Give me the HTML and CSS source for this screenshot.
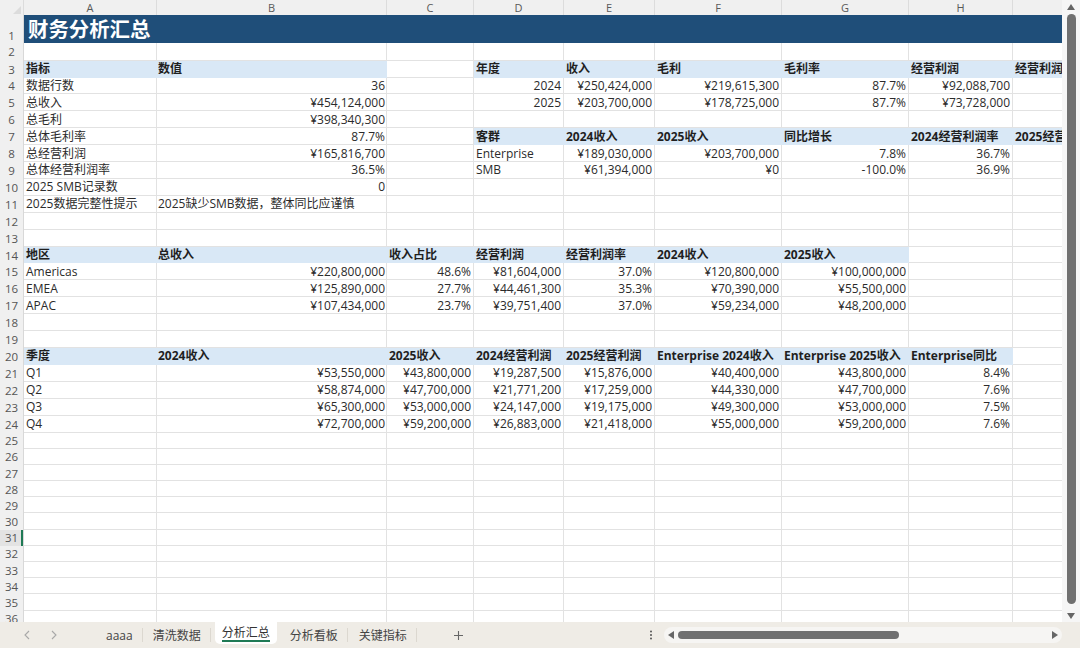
FILE: index.html
```html
<!DOCTYPE html>
<html lang="zh-CN">
<head>
<meta charset="utf-8">
<title>财务分析汇总</title>
<link rel="stylesheet" href="styles.css">
</head>
<body>
<div class="app">
  <div class="main">
    <div class="sheet">
      <table class="grid">
        <colgroup><col class="c0"><col class="ca"><col class="cb"><col class="cc"><col class="cd"><col class="ce"><col class="cf"><col class="cg"><col class="ch"><col class="ci"></colgroup>
        <thead>
          <tr class="cols"><th class="corner"><svg class="corner-mark" width="8" height="8" viewBox="0 0 8 8"><path d="M8 0V8H0Z" fill="#dcdcdc"/></svg></th><th>A</th><th>B</th><th>C</th><th>D</th><th>E</th><th>F</th><th>G</th><th>H</th><th>I</th></tr>
        </thead>
        <tbody>
          <tr class="title-row"><th class="bottom">1</th><td class="title" colspan="9">财务分析汇总</td></tr>
          <tr class="gap"><th>2</th><td></td><td></td><td></td><td></td><td></td><td></td><td></td><td></td><td></td></tr>
          <tr><th>3</th><td class="hd">指标</td><td class="hd">数值</td><td></td><td class="hd">年度</td><td class="hd">收入</td><td class="hd">毛利</td><td class="hd">毛利率</td><td class="hd">经营利润</td><td class="hd">经营利润率</td></tr>
          <tr><th>4</th><td>数据行数</td><td class="r">36</td><td></td><td class="r">2024</td><td class="r">¥250,424,000</td><td class="r">¥219,615,300</td><td class="r">87.7%</td><td class="r">¥92,088,700</td><td></td></tr>
          <tr><th>5</th><td>总收入</td><td class="r">¥454,124,000</td><td></td><td class="r">2025</td><td class="r">¥203,700,000</td><td class="r">¥178,725,000</td><td class="r">87.7%</td><td class="r">¥73,728,000</td><td></td></tr>
          <tr><th>6</th><td>总毛利</td><td class="r">¥398,340,300</td><td></td><td></td><td></td><td></td><td></td><td></td><td></td></tr>
          <tr><th>7</th><td>总体毛利率</td><td class="r">87.7%</td><td></td><td class="hd">客群</td><td class="hd">2024收入</td><td class="hd">2025收入</td><td class="hd">同比增长</td><td class="hd">2024经营利润率</td><td class="hd">2025经营利润率</td></tr>
          <tr><th>8</th><td>总经营利润</td><td class="r">¥165,816,700</td><td></td><td>Enterprise</td><td class="r">¥189,030,000</td><td class="r">¥203,700,000</td><td class="r">7.8%</td><td class="r">36.7%</td><td></td></tr>
          <tr><th>9</th><td>总体经营利润率</td><td class="r">36.5%</td><td></td><td>SMB</td><td class="r">¥61,394,000</td><td class="r">¥0</td><td class="r">-100.0%</td><td class="r">36.9%</td><td></td></tr>
          <tr><th>10</th><td>2025 SMB记录数</td><td class="r">0</td><td></td><td></td><td></td><td></td><td></td><td></td><td></td></tr>
          <tr><th>11</th><td>2025数据完整性提示</td><td>2025缺少SMB数据，整体同比应谨慎</td><td></td><td></td><td></td><td></td><td></td><td></td><td></td></tr>
          <tr><th>12</th><td></td><td></td><td></td><td></td><td></td><td></td><td></td><td></td><td></td></tr>
          <tr><th>13</th><td></td><td></td><td></td><td></td><td></td><td></td><td></td><td></td><td></td></tr>
          <tr><th>14</th><td class="hd">地区</td><td class="hd">总收入</td><td class="hd">收入占比</td><td class="hd">经营利润</td><td class="hd">经营利润率</td><td class="hd">2024收入</td><td class="hd">2025收入</td><td></td><td></td></tr>
          <tr><th>15</th><td>Americas</td><td class="r">¥220,800,000</td><td class="r">48.6%</td><td class="r">¥81,604,000</td><td class="r">37.0%</td><td class="r">¥120,800,000</td><td class="r">¥100,000,000</td><td></td><td></td></tr>
          <tr><th>16</th><td>EMEA</td><td class="r">¥125,890,000</td><td class="r">27.7%</td><td class="r">¥44,461,300</td><td class="r">35.3%</td><td class="r">¥70,390,000</td><td class="r">¥55,500,000</td><td></td><td></td></tr>
          <tr><th>17</th><td>APAC</td><td class="r">¥107,434,000</td><td class="r">23.7%</td><td class="r">¥39,751,400</td><td class="r">37.0%</td><td class="r">¥59,234,000</td><td class="r">¥48,200,000</td><td></td><td></td></tr>
          <tr><th>18</th><td></td><td></td><td></td><td></td><td></td><td></td><td></td><td></td><td></td></tr>
          <tr><th>19</th><td></td><td></td><td></td><td></td><td></td><td></td><td></td><td></td><td></td></tr>
          <tr><th>20</th><td class="hd">季度</td><td class="hd">2024收入</td><td class="hd">2025收入</td><td class="hd">2024经营利润</td><td class="hd">2025经营利润</td><td class="hd">Enterprise 2024收入</td><td class="hd">Enterprise 2025收入</td><td class="hd">Enterprise同比</td><td></td></tr>
          <tr><th>21</th><td>Q1</td><td class="r">¥53,550,000</td><td class="r">¥43,800,000</td><td class="r">¥19,287,500</td><td class="r">¥15,876,000</td><td class="r">¥40,400,000</td><td class="r">¥43,800,000</td><td class="r">8.4%</td><td></td></tr>
          <tr><th>22</th><td>Q2</td><td class="r">¥58,874,000</td><td class="r">¥47,700,000</td><td class="r">¥21,771,200</td><td class="r">¥17,259,000</td><td class="r">¥44,330,000</td><td class="r">¥47,700,000</td><td class="r">7.6%</td><td></td></tr>
          <tr><th>23</th><td>Q3</td><td class="r">¥65,300,000</td><td class="r">¥53,000,000</td><td class="r">¥24,147,000</td><td class="r">¥19,175,000</td><td class="r">¥49,300,000</td><td class="r">¥53,000,000</td><td class="r">7.5%</td><td></td></tr>
          <tr><th>24</th><td>Q4</td><td class="r">¥72,700,000</td><td class="r">¥59,200,000</td><td class="r">¥26,883,000</td><td class="r">¥21,418,000</td><td class="r">¥55,000,000</td><td class="r">¥59,200,000</td><td class="r">7.6%</td><td></td></tr>
          <tr class="short"><th>25</th><td></td><td></td><td></td><td></td><td></td><td></td><td></td><td></td><td></td></tr>
          <tr class="short"><th>26</th><td></td><td></td><td></td><td></td><td></td><td></td><td></td><td></td><td></td></tr>
          <tr class="short"><th>27</th><td></td><td></td><td></td><td></td><td></td><td></td><td></td><td></td><td></td></tr>
          <tr class="short"><th>28</th><td></td><td></td><td></td><td></td><td></td><td></td><td></td><td></td><td></td></tr>
          <tr class="short"><th>29</th><td></td><td></td><td></td><td></td><td></td><td></td><td></td><td></td><td></td></tr>
          <tr class="short"><th>30</th><td></td><td></td><td></td><td></td><td></td><td></td><td></td><td></td><td></td></tr>
          <tr class="short active"><th>31</th><td></td><td></td><td></td><td></td><td></td><td></td><td></td><td></td><td></td></tr>
          <tr class="short"><th>32</th><td></td><td></td><td></td><td></td><td></td><td></td><td></td><td></td><td></td></tr>
          <tr class="short"><th>33</th><td></td><td></td><td></td><td></td><td></td><td></td><td></td><td></td><td></td></tr>
          <tr class="short"><th>34</th><td></td><td></td><td></td><td></td><td></td><td></td><td></td><td></td><td></td></tr>
          <tr class="short"><th>35</th><td></td><td></td><td></td><td></td><td></td><td></td><td></td><td></td><td></td></tr>
          <tr class="short"><th>36</th><td></td><td></td><td></td><td></td><td></td><td></td><td></td><td></td><td></td></tr>
        </tbody>
      </table>
    </div>
    <div class="vscroll">
      <svg class="arrow" width="10" height="8" viewBox="0 0 10 8"><path d="M5 1L9 7H1Z" fill="#666"/></svg>
      <div class="vthumb"></div>
      <svg class="arrow" width="10" height="8" viewBox="0 0 10 8"><path d="M5 7L9 1H1Z" fill="#666"/></svg>
    </div>
  </div>
  <div class="tabbar">
    <div class="nav">
      <svg width="8" height="12" viewBox="0 0 8 12"><path d="M6 2L2 6L6 10" fill="none" stroke="#a8a8a8" stroke-width="1.1"/></svg>
      <svg width="8" height="12" viewBox="0 0 8 12"><path d="M2 2L6 6L2 10" fill="none" stroke="#a8a8a8" stroke-width="1.1"/></svg>
    </div>
    <div class="tabs">
      <span class="tab tab-latin">aaaa</span>
      <span class="tab">清洗数据</span>
      <span class="tab active-tab">分析汇总</span>
      <span class="tab">分析看板</span>
      <span class="tab tab-last">关键指标</span>
    </div>
    <svg class="plus" width="11" height="11" viewBox="0 0 11 11"><path d="M5.5 1V10M1 5.5H10" stroke="#666" stroke-width="1.1"/></svg>
    <svg class="dots" width="4" height="10" viewBox="0 0 4 10"><circle cx="2" cy="1.5" r="1" fill="#555"/><circle cx="2" cy="5" r="1" fill="#555"/><circle cx="2" cy="8.5" r="1" fill="#555"/></svg>
    <div class="hscroll">
      <svg width="8" height="10" viewBox="0 0 8 10"><path d="M1 5L7 1V9Z" fill="#666"/></svg>
      <div class="htrack"><div class="hthumb"></div></div>
      <svg width="8" height="10" viewBox="0 0 8 10"><path d="M7 5L1 1V9Z" fill="#666"/></svg>
    </div>
  </div>
</div>
</body>
</html>
```
FILE: styles.css
```css
* { box-sizing: border-box; }
html, body { margin: 0; padding: 0; }
body {
  font-family: "Open Sans", "Noto Sans CJK SC", sans-serif;
  font-size: 12px;
  color: #2b2b2b;
  background: #fff;
}
.app { width: 1080px; height: 648px; display: flex; flex-direction: column; overflow: hidden; }
.main { height: 622px; display: flex; }
.sheet { flex: 1; overflow: hidden; background: #fff; }

.grid { table-layout: fixed; width: 1117px; border-collapse: separate; border-spacing: 0; }
.c0 { width: 24px; }
.ca { width: 133px; }
.cb { width: 230px; }
.cc { width: 87px; }
.cd { width: 90px; }
.ce { width: 91px; }
.cf { width: 127px; }
.cg { width: 127px; }
.ch { width: 104px; }
.ci { width: 104px; }

.grid tr { height: 16.92px; }
.grid tr.cols { height: 15px; }
.grid tr.gap { height: 17.6px; }
.grid tr.short { height: 16.2px; }
.grid tr.title-row { height: 28px; }
.grid td {
  padding: 0 2px;
  line-height: 15px;
  white-space: nowrap;
  overflow: hidden;
  border-right: 1px solid #e2e2e2;
  border-bottom: 1px solid #e2e2e2;
}
.grid td:nth-child(3) { padding: 0 1px; }
.grid th { padding: 0; font-weight: 400; line-height: 15px; color: #555; background: #f0f0f0; text-align: center; }
.grid thead th { height: 15px; font-size: 11px; border-right: 1px solid #dcdcdc; color: #595959; position: relative; }
.grid tbody th { border-right: 1px solid #d8d8d8; font-size: 11.5px; }
.grid th.bottom { vertical-align: bottom; }
.corner { background: #f0f0f0; }
.corner-mark { position: absolute; right: 2px; bottom: 1px; }

.grid td.r { text-align: right; }
.grid td.hd { background: #d9e8f6; font-weight: 700; color: #1f1f1f; border-right-color: #d9e8f6; border-bottom-color: #d9e8f6; }
.grid td.title {
  background: #1f4e79;
  color: #fff;
  font-size: 20.4px;
  font-weight: 700;
  line-height: 26px;
  padding: 0 4px;
  border: 0;
}
.active th { background: #e3e3e3; box-shadow: inset -2px 0 0 #1f7a55; }

.vscroll { width: 18px; background: #f6f6f6; display: flex; flex-direction: column; align-items: center; padding: 3px 0 2px; }
.vthumb { width: 9px; flex: 1; margin: 3px 0 8px; border-radius: 5px; background: #707070; }
.arrow { display: block; }

.tabbar { height: 26px; background: #efece6; display: flex; align-items: center; position: relative; }
.nav { width: 68px; padding-left: 23px; display: flex; gap: 19px; }
.tabs { margin-left: 28px; display: flex; align-items: stretch; height: 26px; }
.tab { position: relative; display: flex; align-items: center; padding: 0 10px; color: #444; }
.tab::after { content: ""; position: absolute; right: 0; top: 6px; height: 14px; width: 1px; background: #dcd8d0; }
.tab-latin { font-size: 12px; }
.tab-last { margin-left: 1px; }
.active-tab { background: #fff; border-radius: 0 0 5px 5px; margin: 0 3px 4px 4px; padding: 0 7px 3px; height: 22px; color: #333; }
.active-tab::after { left: 7px; right: 7px; top: auto; bottom: 2px; width: auto; height: 2px; background: #1f7a55; }
.plus { margin-left: 36px; }
.dots { margin-left: 185px; }
.hscroll { margin-left: 11px; width: 398px; height: 16px; border-radius: 8px; background: #f6f5f3; display: flex; align-items: center; padding: 0 3px 0 3px; gap: 3px; }
.htrack { flex: 1; }
.hthumb { width: 221px; height: 8px; border-radius: 4px; background: #707070; }
```
